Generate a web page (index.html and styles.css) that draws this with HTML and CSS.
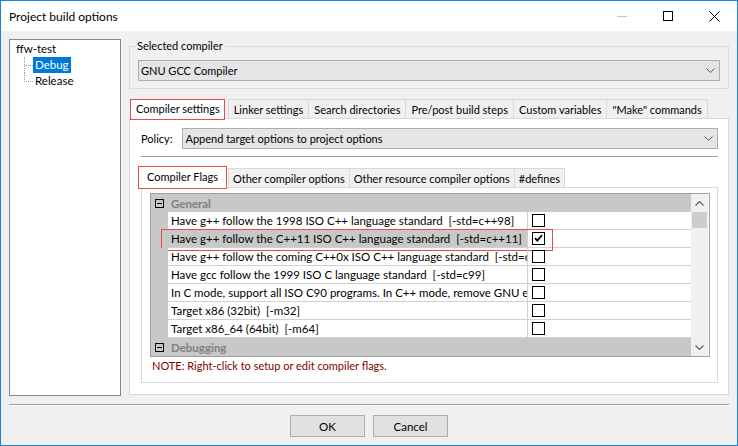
FILE: index.html
```html
<!DOCTYPE html>
<html>
<head>
<meta charset="utf-8">
<title>Project build options</title>
<link rel="stylesheet" href="styles.css">
</head>
<body>
<div class="window">
  <div class="titlebar">
    <span class="title">Project build options</span>
    <div class="caption-buttons">
      <span class="cap-btn"><svg width="10" height="1" viewBox="0 0 10 1"><rect width="10" height="1" fill="#c4c4c4"/></svg></span>
      <span class="cap-btn"><svg width="10" height="10" viewBox="0 0 10 10"><rect x="0.5" y="0.5" width="9" height="9" fill="none" stroke="#000" stroke-width="1"/></svg></span>
      <span class="cap-btn"><svg width="11" height="11" viewBox="0 0 11 11"><path d="M0.5 0.5L10.5 10.5M10.5 0.5L0.5 10.5" stroke="#000" stroke-width="1" fill="none"/></svg></span>
    </div>
  </div>
  <div class="body">
    <div class="main">
      <div class="tree">
        <div class="node">ffw-test</div>
        <div class="children">
          <div class="child"><span class="branch"></span><span class="label selected">Debug</span></div>
          <div class="child last"><span class="branch"></span><span class="label">Release</span></div>
        </div>
      </div>
      <div class="right">
        <fieldset class="group">
          <legend>Selected compiler</legend>
          <div class="combo">
            <span class="combo-text">GNU GCC Compiler</span>
            <svg class="chev" width="9" height="5" viewBox="0 0 9 5"><path d="M0.5 0.5L4.5 4.5L8.5 0.5" stroke="#555" fill="none"/></svg>
          </div>
        </fieldset>
        <div class="notebook outer">
          <div class="tabs">
            <div class="tab active">Compiler settings</div>
            <div class="tab first-after">Linker settings</div>
            <div class="tab">Search directories</div>
            <div class="tab">Pre/post build steps</div>
            <div class="tab">Custom variables</div>
            <div class="tab">"Make" commands</div>
          </div>
          <div class="panel outer-panel">
            <div class="policy">
              <span class="policy-label">Policy:</span>
              <div class="combo policy-combo">
                <span class="combo-text">Append target options to project options</span>
                <svg class="chev" width="9" height="5" viewBox="0 0 9 5"><path d="M0.5 0.5L4.5 4.5L8.5 0.5" stroke="#555" fill="none"/></svg>
              </div>
            </div>
            <div class="hr"></div>
            <div class="notebook inner">
              <div class="tabs inner-tabs">
                <div class="tab active">Compiler Flags</div>
                <div class="tab first-after">Other compiler options</div>
                <div class="tab">Other resource compiler options</div>
                <div class="tab">#defines</div>
              </div>
              <div class="panel inner-panel">
                <div class="pgrid">
                  <div class="pg-rows">
                    <div class="cat"><span class="toggle"><svg width="7" height="7" viewBox="0 0 7 7"><rect x="1" y="3" width="5" height="1" fill="#000"/></svg></span><span class="cat-label">General</span></div>
                    <div class="row">
                      <span class="margin"></span>
                      <span class="lbl">Have g++ follow the 1998 ISO C++ language standard  [-std=c++98]</span>
                      <span class="val"><span class="check"></span></span>
                    </div>
                    <div class="row sel">
                      <span class="margin"></span>
                      <span class="lbl">Have g++ follow the C++11 ISO C++ language standard  [-std=c++11]</span>
                      <span class="val"><span class="check"><svg width="11" height="11" viewBox="0 0 11 11"><path d="M2 5.2L4.3 7.6L9 2.2" stroke="#000" stroke-width="1.8" fill="none"/></svg></span></span>
                      <span class="annot"></span>
                    </div>
                    <div class="row">
                      <span class="margin"></span>
                      <span class="lbl">Have g++ follow the coming C++0x ISO C++ language standard  [-std=c++0x]</span>
                      <span class="val"><span class="check"></span></span>
                    </div>
                    <div class="row">
                      <span class="margin"></span>
                      <span class="lbl">Have gcc follow the 1999 ISO C language standard  [-std=c99]</span>
                      <span class="val"><span class="check"></span></span>
                    </div>
                    <div class="row">
                      <span class="margin"></span>
                      <span class="lbl">In C mode, support all ISO C90 programs. In C++ mode, remove GNU extensions that conflict with ISO C++  [-ansi]</span>
                      <span class="val"><span class="check"></span></span>
                    </div>
                    <div class="row">
                      <span class="margin"></span>
                      <span class="lbl">Target x86 (32bit)  [-m32]</span>
                      <span class="val"><span class="check"></span></span>
                    </div>
                    <div class="row">
                      <span class="margin"></span>
                      <span class="lbl">Target x86_64 (64bit)  [-m64]</span>
                      <span class="val"><span class="check"></span></span>
                    </div>
                    <div class="cat"><span class="toggle"><svg width="7" height="7" viewBox="0 0 7 7"><rect x="1" y="3" width="5" height="1" fill="#000"/></svg></span><span class="cat-label">Debugging</span></div>
                  </div>
                  <div class="scrollbar">
                    <span class="sb-arrow"><svg width="9" height="5" viewBox="0 0 9 5"><path d="M0.5 4.5L4.5 0.5L8.5 4.5" stroke="#606060" stroke-width="1.2" fill="none"/></svg></span>
                    <span class="sb-track"><span class="sb-thumb"></span></span>
                    <span class="sb-arrow"><svg width="9" height="5" viewBox="0 0 9 5"><path d="M0.5 0.5L4.5 4.5L8.5 0.5" stroke="#606060" stroke-width="1.2" fill="none"/></svg></span>
                  </div>
                </div>
                <div class="note">NOTE: Right-click to setup or edit compiler flags.</div>
              </div>
            </div>
          </div>
        </div>
      </div>
    </div>
    <div class="separator"></div>
    <div class="buttons">
      <button class="btn">OK</button>
      <button class="btn">Cancel</button>
    </div>
  </div>
</div>
</body>
</html>
```

FILE: styles.css
```css
* { box-sizing: border-box; }
html, body { margin: 0; padding: 0; }
body {
  width: 738px;
  height: 446px;
  font-family: Lato, "Liberation Sans", sans-serif;
  font-size: 11px;
  color: #000;
  background: #fff;
  overflow: hidden;
}
.window {
  width: 738px;
  height: 446px;
  border: 1px solid #1883d7;
  display: flex;
  flex-direction: column;
  background: #f0f0f0;
}
.titlebar {
  height: 30px;
  flex: none;
  background: #fff;
  display: flex;
  align-items: center;
}
.title { flex: 1; padding-left: 8px; font-size: 12px; padding-top: 1px; }
.caption-buttons { display: flex; height: 30px; }
.cap-btn {
  width: 46px;
  height: 30px;
  display: flex;
  align-items: center;
  justify-content: center;
}
.body {
  flex: 1;
  display: flex;
  flex-direction: column;
  padding: 8px 8px 8px 8px;
}
.main { display: flex; gap: 8px; height: 357px; flex: none; }

/* tree */
.tree {
  width: 112px;
  flex: none;
  background: #fff;
  border: 1px solid #828790;
  padding: 1px 0 0 6px;
  line-height: 16px;
  font-size: 11.5px;
}
.node { height: 16px; }
.children { margin-left: 8px; }
.child { display: flex; height: 16px; }
.child:not(.last) { border-left: 1px dotted #a0a0a0; }
.branch { width: 8px; height: 9px; border-bottom: 1px dotted #a0a0a0; flex: none; }
.last .branch { width: 9px; border-left: 1px dotted #a0a0a0; }
.label { padding: 0 2px; height: 16px; }
.label.selected { background: #0078d7; color: #fff; }

/* right column */
.right { flex: 1; min-width: 0; display: flex; flex-direction: column; padding-bottom: 1px; }
.group {
  margin: 0;
  padding: 0 8px 7px 8px;
  border: 1px solid #dcdcdc;
  min-width: 0;
}
.group legend {
  padding: 0 2px;
  margin-left: -3px;
  line-height: 14px;
}
.combo {
  height: 21px;
  border: 1px solid #adadad;
  background: #e5e5e5;
  display: flex;
  align-items: center;
  padding: 0 4px 0 2px;
}
.group .combo { margin-top: 7px; }
.combo-text { flex: 1; white-space: nowrap; }
.chev { flex: none; }

/* notebooks */
.notebook { display: flex; flex-direction: column; flex: 1; min-height: 0; }
.notebook.outer { margin-top: 10px; }
.tabs { display: flex; align-items: flex-end; height: 19px; flex: none; }
.tab {
  height: 19px;
  padding: 1px 5px 0 5px;
  border: 1px solid #d9d9d9;
  border-bottom: none;
  background: #f0f0f0;
  display: flex;
  align-items: center;
  margin-left: -1px;
  white-space: nowrap;
}
.tab.active {
  height: 21px;
  margin-bottom: -2px;
  margin-left: 1px;
  padding: 0 4px 3px 5px;
  background: #fff;
  border: 1px solid #e94b4b;
  z-index: 1;
}
.tab.first-after { margin-left: 3px; }
.panel {
  flex: 1;
  background: #fff;
  border: 1px solid #d9d9d9;
  display: flex;
  flex-direction: column;
  min-height: 0;
}
.outer-panel { padding: 9px 10px 11px 11px; }
.policy { display: flex; align-items: center; gap: 10px; }
.policy-label { flex: none; }
.policy-combo { flex: 1; }
.hr { height: 1px; background: #a0a0a0; margin-top: 7px; flex: none; }

.notebook.inner { margin-top: 9px; }
.inner-tabs { height: 21px; }
.inner-tabs .tab { padding: 1px 4px 0 4px; }
.inner-tabs .tab.active {
  height: 23px;
  margin-left: -3px;
  padding: 0 8px 3px 8px;
}
.inner-tabs .tab.first-after { margin-left: 1px; }
.inner-panel { padding: 5px 7px 6px 8px; }

/* property grid */
.pgrid {
  display: flex;
  border: 1px solid #a0a0a0;
  background: #fff;
  flex: none;
}
.pg-rows { flex: 1; min-width: 0; }
.cat {
  height: 18px;
  background: #c8c8c8;
  display: flex;
  align-items: center;
}
.toggle {
  width: 9px;
  height: 9px;
  border: 1px solid #000;
  margin-left: 4px;
  display: flex;
}
.cat-label { margin-left: 7px; font-weight: bold; color: #808080; font-size: 11.5px; }
.row {
  display: grid;
  grid-template-columns: 17px 1fr 164px;
  height: 18px;
  position: relative;
}
.margin { background: #c8c8c8; }
.lbl {
  border-bottom: 1px solid #d0d0d0;
  padding-left: 3px;
  line-height: 17px;
  font-size: 11.5px;
  white-space: pre;
  overflow: hidden;
}
.row.sel .lbl { background: #c8c8c8; }
.val {
  border-left: 1px solid #d0d0d0;
  border-bottom: 1px solid #d0d0d0;
  display: flex;
  align-items: center;
  padding-left: 4px;
}
.check {
  width: 13px;
  height: 13px;
  border: 1px solid #000;
  display: flex;
  background: #fff;
}
.annot {
  position: absolute;
  left: 10px;
  top: -1px;
  width: 392px;
  height: 22px;
  border: 1px solid #e94b4b;
  pointer-events: none;
}
.scrollbar {
  width: 17px;
  margin-right: 1px;
  background: #f0f0f0;
  display: flex;
  flex-direction: column;
  flex: none;
}
.sb-arrow { height: 18px; display: flex; align-items: center; justify-content: center; flex: none; }
.sb-track { flex: 1; display: flex; flex-direction: column; padding: 0 1px; }
.sb-thumb { height: 16px; background: #cdcdcd; }
.note {
  color: #800000;
  line-height: 16px;
  padding: 1px 0 0 2px;
}

/* bottom */
.separator {
  height: 2px;
  border-top: 1px solid #a0a0a0;
  border-bottom: 1px solid #fff;
  margin-top: 8px;
  flex: none;
}
.buttons { display: flex; justify-content: center; gap: 8px; margin-top: 9px; }
.btn {
  width: 75px;
  height: 22px;
  font-family: inherit;
  font-size: 11.5px;
  color: #000;
  background: #e1e1e1;
  border: 1px solid #adadad;
  padding: 0;
  margin: 0;
}
```
